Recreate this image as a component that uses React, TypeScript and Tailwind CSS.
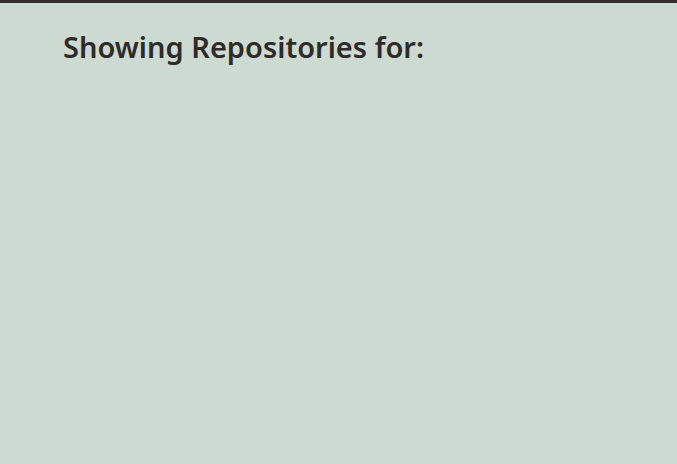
export default function App() {
  return (
    <div className="min-h-[464px] bg-[#cddad1] border-t-[3px] border-[#332f2e]">
      <div className="px-[63px] pt-[26px]">
        <h1 className="font-['Noto_Sans',sans-serif] text-[29px] font-semibold leading-[36px] text-[#2f2b29]">
          Showing Repositories for:
        </h1>
      </div>
    </div>
  );
}
